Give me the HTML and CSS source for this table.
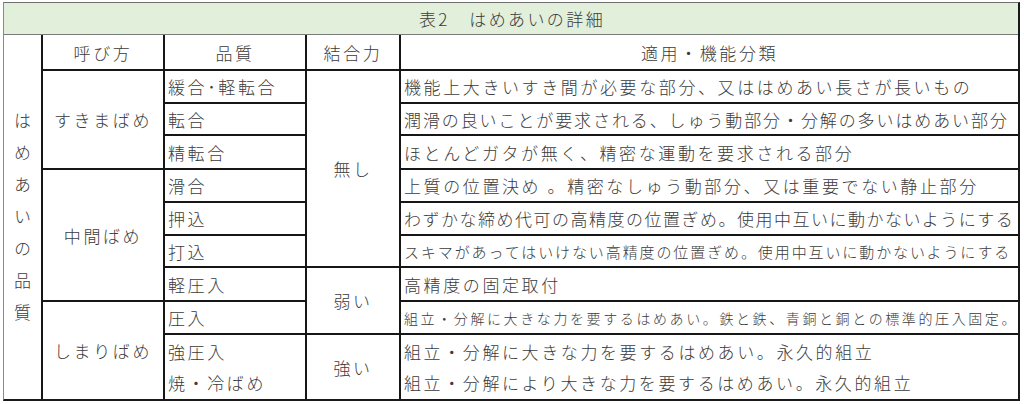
FILE: index.html
```html
<!DOCTYPE html>
<html lang="ja">
<head>
<meta charset="utf-8">
<title>表2 はめあいの詳細</title>
<link rel="stylesheet" href="styles.css">
</head>
<body>
<div class="sheet">
  <div class="title">表2　はめあいの詳細</div>
  <div class="grid">
    <div class="cell side">はめあいの品質</div>

    <div class="cell center">呼び方</div>
    <div class="cell center">品質</div>
    <div class="cell center">結合力</div>
    <div class="cell center">適用・機能分類</div>

    <div class="cell center span3">すきまばめ</div>
    <div class="cell">緩合･軽転合</div>
    <div class="cell center span6">無し</div>
    <div class="cell">機能上大きいすき間が必要な部分、又ははめあい長さが長いもの</div>

    <div class="cell">転合</div>
    <div class="cell snug">潤滑の良いことが要求される、しゅう動部分・分解の多いはめあい部分</div>

    <div class="cell">精転合</div>
    <div class="cell">ほとんどガタが無く、精密な運動を要求される部分</div>

    <div class="cell center span4">中間ばめ</div>
    <div class="cell">滑合</div>
    <div class="cell">上質の位置決め 。精密なしゅう動部分、又は重要でない静止部分</div>

    <div class="cell">押込</div>
    <div class="cell tight">わずかな締め代可の高精度の位置ぎめ。使用中互いに動かないようにする</div>

    <div class="cell">打込</div>
    <div class="cell small">スキマがあってはいけない高精度の位置ぎめ。使用中互いに動かないようにする</div>

    <div class="cell">軽圧入</div>
    <div class="cell center span2">弱い</div>
    <div class="cell">高精度の固定取付</div>

    <div class="cell center span2">しまりばめ</div>
    <div class="cell">圧入</div>
    <div class="cell smaller">組立・分解に大きな力を要するはめあい。鉄と鉄、青銅と銅との標準的圧入固定。</div>

    <div class="cell lines"><span>強圧入</span><span>焼・冷ばめ</span></div>
    <div class="cell center">強い</div>
    <div class="cell lines"><span>組立・分解に大きな力を要するはめあい。永久的組立</span><span>組立・分解により大きな力を要するはめあい。永久的組立</span></div>
  </div>
</div>
</body>
</html>
```

FILE: styles.css
```css
html, body {
  margin: 0;
  padding: 0;
  background: #ffffff;
}

body {
  font-family: "Noto Sans CJK JP", "Noto Sans", sans-serif;
  font-weight: 300;
  color: #3b3b3b;
  font-size: 17px;
}

.sheet {
  margin: 2px 0 0 3px;
  width: 1017px;
  border-top: 1px solid #6f6f6f;
  border-left: 1px solid #8a8a8a;
  border-right: 2px solid #1a1a1a;
  border-bottom: 2px solid #1a1a1a;
  box-sizing: border-box;
  display: flex;
  flex-direction: column;
}

.title {
  height: 31px;
  background: #e2efda;
  border-bottom: 1px solid #7a7a7a;
  display: flex;
  align-items: center;
  justify-content: center;
  letter-spacing: 2.4px;
  padding-left: 2px;
}

.grid {
  display: grid;
  grid-template-columns: 37px 120px 140px 92px 1fr;
  grid-template-rows: 34px 31px 30px 32px 31px 31px 30px 32px 31px 64px;
  gap: 2px;
  background: #161616;
}

.cell {
  background: #ffffff;
  display: flex;
  align-items: center;
  padding-left: 3px;
  letter-spacing: 2.6px;
  white-space: nowrap;
  overflow: hidden;
}

.center {
  justify-content: center;
  padding-left: 0;
}

.side {
  grid-row: 1 / -1;
  grid-column: 1;
  writing-mode: vertical-rl;
  justify-content: center;
  align-items: center;
  padding: 14px 0 0 0;
  letter-spacing: 15px;
  line-height: 37px;
}

.span2 { grid-row: span 2; }
.span3 { grid-row: span 3; }
.span4 { grid-row: span 4; }
.span6 { grid-row: span 6; }

.snug {
  letter-spacing: 1.9px;
}

.tight {
  letter-spacing: 1.5px;
}

.small {
  font-size: 15px;
  letter-spacing: 1.9px;
}

.smaller {
  font-size: 14px;
  letter-spacing: 2.6px;
}

.lines {
  flex-direction: column;
  align-items: flex-start;
  justify-content: center;
  line-height: 31px;
}
```
